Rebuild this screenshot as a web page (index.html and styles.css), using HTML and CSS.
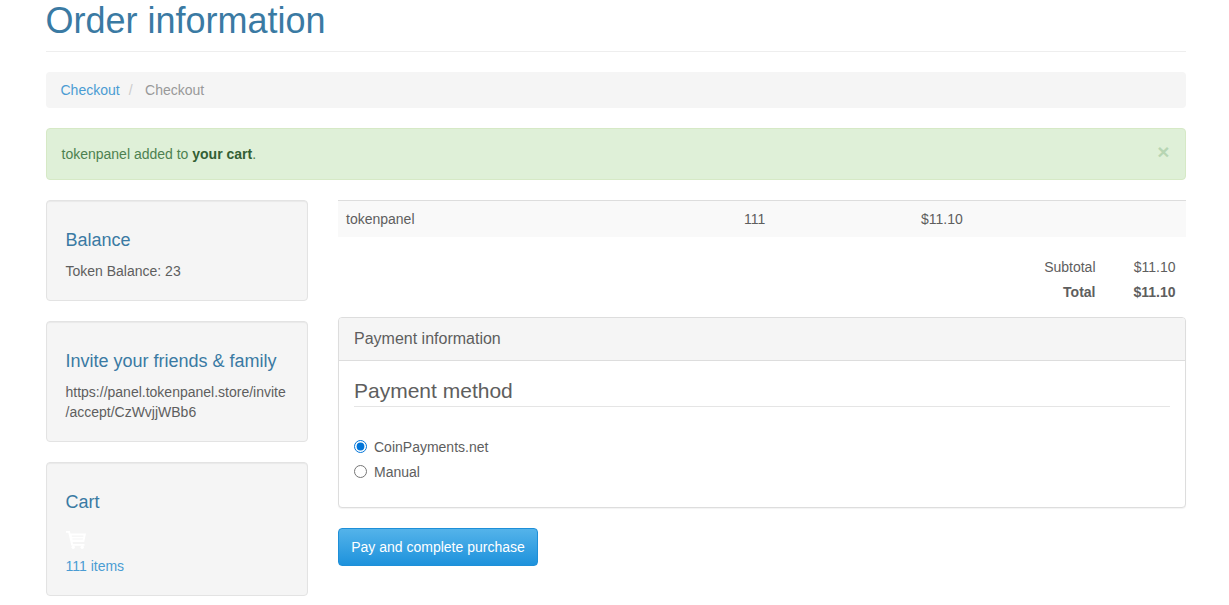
FILE: index.html
```html
<!DOCTYPE html>
<html lang="en">
<head>
<meta charset="utf-8">
<title>Order information</title>
<link rel="stylesheet" href="styles.css">
</head>
<body>
<div class="container">
  <div class="page-header"><h1>Order information</h1></div>
  <ol class="breadcrumb">
    <li><a href="#">Checkout</a></li>
    <li class="sep">/</li>
    <li class="active">Checkout</li>
  </ol>
  <div class="alert">
    <span>tokenpanel added to <b>your cart</b>.</span>
    <span class="close">×</span>
  </div>
  <div class="columns">
    <aside class="sidebar">
      <section class="well">
        <h4>Balance</h4>
        <p>Token Balance: 23</p>
      </section>
      <section class="well">
        <h4>Invite your friends &amp; family</h4>
        <p>https://panel.tokenpanel.store/invite<br>/accept/CzWvjjWBb6</p>
      </section>
      <section class="well">
        <h4>Cart</h4>
        <svg class="cart-icon" viewBox="0 0 20 18" width="20" height="18" aria-hidden="true">
          <path fill-rule="evenodd" fill="#fff" d="M0 0h3.8l.7 2.5H20l-1.8 8.5H6.6l.4 2h11.5v1.8H5.4L2.3 1.8H0zM5.6 4.6l.3 1.2h11.4l.3-1.2zM6.2 7.4l.3 1.2h10.2l.3-1.2z"/>
          <circle cx="7.2" cy="16.3" r="1.7" fill="#fff"/>
          <circle cx="16.2" cy="16.3" r="1.7" fill="#fff"/>
        </svg>
        <a class="items" href="#">111 items</a>
      </section>
    </aside>
    <main class="content">
      <div class="item-row">
        <span class="cell-name">tokenpanel</span>
        <span class="cell-qty">111</span>
        <span class="cell-price">$11.10</span>
      </div>
      <div class="totals">
        <div class="total-row"><span>Subtotal</span><span class="amount">$11.10</span></div>
        <div class="total-row strong"><span>Total</span><span class="amount">$11.10</span></div>
      </div>
      <div class="panel">
        <div class="panel-heading">Payment information</div>
        <div class="panel-body">
          <h3>Payment method</h3>
          <label class="radio"><input type="radio" name="method" checked> CoinPayments.net</label>
          <label class="radio"><input type="radio" name="method"> Manual</label>
        </div>
      </div>
      <button class="btn" type="button">Pay and complete purchase</button>
    </main>
  </div>
</div>
</body>
</html>
```
FILE: styles.css
```css
* { box-sizing: border-box; }
html, body { margin: 0; padding: 0; background: #fff; }
body {
  font-family: "Liberation Sans", Arial, sans-serif;
  font-size: 14px;
  line-height: 20px;
  color: #5e5e5e;
  overflow: hidden;
}
a { color: #4a9cd3; text-decoration: none; }
.container { width: 1140px; margin-left: 45.5px; }
.page-header { height: 52px; padding-top: 1px; border-bottom: 1px solid #eee; }
h1 {
  margin: 0;
  font-size: 36px;
  font-weight: 400;
  line-height: 40px;
  color: #3a7aa3;
}
.breadcrumb {
  display: flex;
  list-style: none;
  margin: 20px 0;
  padding: 8px 15px;
  height: 36px;
  background: #f5f5f5;
  border-radius: 4px;
}
.sep { color: #ccc; padding: 0 9px; }
.active { color: #999; padding-left: 3.5px; }
.alert {
  display: flex;
  justify-content: space-between;
  align-items: center;
  height: 52px;
  padding: 0 15px;
  margin-bottom: 20px;
  background: #dff0d8;
  border: 1px solid #d6e9c6;
  border-radius: 4px;
  color: #4d8150;
}
.alert b { color: #335f34; }
.close {
  font-size: 21px;
  font-weight: 700;
  color: #2f7a35;
  opacity: .22;
  margin-top: -5px;
}
.columns { display: flex; gap: 30.5px; align-items: flex-start; }
.sidebar { width: 262px; flex: none; display: flex; flex-direction: column; gap: 20px; }
.well {
  padding: 19px;
  background: #f5f5f5;
  border: 1px solid #e3e3e3;
  border-radius: 4px;
  box-shadow: inset 0 1px 1px rgba(0,0,0,.05);
}
.well h4 {
  margin: 10px 0 11px;
  font-size: 18px;
  font-weight: 400;
  line-height: 20px;
  color: #3a7aa3;
}
.well p { margin: 0; }
.cart-icon { display: block; margin: 19px 0 0; }
.items { display: block; margin: 7px 0 0; }
.content { flex: 1; min-width: 0; }
.item-row {
  display: flex;
  height: 37px;
  align-items: center;
  background: #f9f9f9;
  border-top: 1px solid #ddd;
  padding-left: 8px;
}
.cell-name { width: 398px; }
.cell-qty { width: 177px; }
.totals { padding: 17px 10px 0 0; margin-bottom: 13px; }
.total-row { display: flex; justify-content: flex-end; height: 25px; align-items: center; }
.amount { width: 80px; text-align: right; }
.strong { font-weight: 700; }
.panel {
  background: #fff;
  border: 1px solid #ddd;
  border-radius: 4px;
  box-shadow: 0 1px 1px rgba(0,0,0,.05);
  margin-bottom: 20px;
}
.panel-heading {
  height: 43px;
  padding: 11px 15px 9px;
  font-size: 16px;
  line-height: 20px;
  background: #f5f5f5;
  border-bottom: 1px solid #ddd;
  border-radius: 3px 3px 0 0;
}
.panel-body { padding: 15px; height: 146px; }
.panel-body h3 {
  margin: 0 0 27px;
  font-size: 21px;
  font-weight: 400;
  line-height: 30px;
  height: 31px;
  border-bottom: 1px solid #e5e5e5;
}
.radio { display: flex; align-items: center; height: 25px; }
.radio input { margin: 0 7px 0 0; width: 13px; height: 13px; accent-color: #0075d9; }
.btn {
  display: block;
  width: 200px;
  height: 38px;
  padding: 0;
  font-family: inherit;
  font-size: 14px;
  color: #fff;
  background: linear-gradient(#54b3ea, #1e92dc);
  border: 1px solid #1e8fd8;
  border-radius: 4px;
}
```
